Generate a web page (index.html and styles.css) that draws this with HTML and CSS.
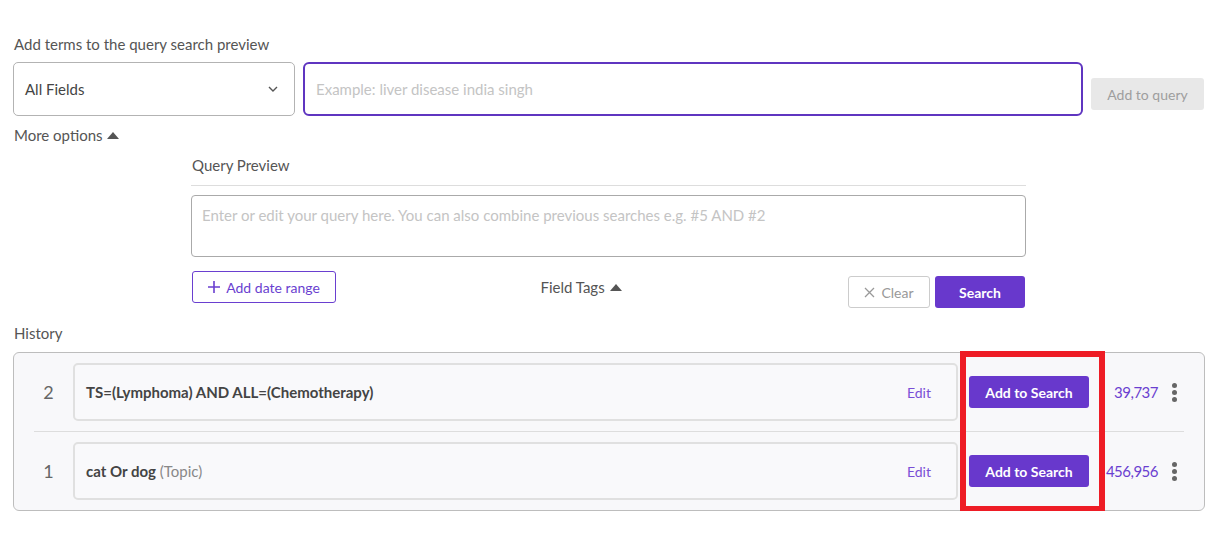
FILE: index.html
```html
<!DOCTYPE html>
<html lang="en">
<head>
  <meta charset="UTF-8">
  <title>Advanced Search</title>
  <link rel="stylesheet" href="styles.css">
</head>
<body>
  <main class="page">
    <div class="label">Add terms to the query search preview</div>
    <div class="term-row">
      <div class="field-select">
        <span>All Fields</span>
        <svg width="10" height="6" viewBox="0 0 10 6"><path d="M1 1l4 4 4-4" fill="none" stroke="#555" stroke-width="1.4"/></svg>
      </div>
      <div class="term-input">Example: liver disease india singh</div>
      <button class="btn-disabled">Add to query</button>
    </div>
    <div class="more-options">More options <svg class="caret" width="12" height="7" viewBox="0 0 12 7"><path d="M0 7L6 0l6 7z" fill="#555"/></svg></div>

    <section class="preview">
      <div class="preview-title">Query Preview</div>
      <div class="preview-box">Enter or edit your query here. You can also combine previous searches e.g. #5 AND #2</div>
      <div class="preview-actions">
        <button class="btn-outline">
          <svg width="12" height="12" viewBox="0 0 12 12"><path d="M6 0v12M0 6h12" stroke="#6a3fd0" stroke-width="1.6"/></svg>
          Add date range
        </button>
        <div class="field-tags">Field Tags <svg class="caret" width="12" height="7" viewBox="0 0 12 7"><path d="M0 7L6 0l6 7z" fill="#555"/></svg></div>
        <div class="action-buttons">
          <button class="btn-clear">
            <svg width="11" height="11" viewBox="0 0 11 11"><path d="M1 1l9 9M10 1l-9 9" stroke="#999" stroke-width="1.3"/></svg>
            Clear
          </button>
          <button class="btn-primary btn-search">Search</button>
        </div>
      </div>
    </section>

    <div class="label history-label">History</div>
    <div class="history">
      <div class="history-row">
        <div class="num">2</div>
        <div class="query-box">
          <span><b>TS=(Lymphoma) AND ALL=(Chemotherapy)</b></span>
          <span class="edit">Edit</span>
        </div>
        <button class="btn-primary btn-add">Add to Search</button>
        <div class="count">39,737</div>
        <div class="kebab"><i></i><i></i><i></i></div>
      </div>
      <div class="history-row">
        <div class="num">1</div>
        <div class="query-box">
          <span><b>cat Or dog</b> <span class="muted">(Topic)</span></span>
          <span class="edit">Edit</span>
        </div>
        <button class="btn-primary btn-add">Add to Search</button>
        <div class="count">456,956</div>
        <div class="kebab"><i></i><i></i><i></i></div>
      </div>
      <div class="highlight"></div>
    </div>
  </main>
</body>
</html>
```
FILE: styles.css
```css
body {
  margin: 0;
  background: #fff;
  color: #555;
  font-family: 'Lato', 'Open Sans', sans-serif;
  font-size: 15px;
}

.page {
  padding: 34px 17px 0 13px;
  width: 1192px;
}

.label {
  padding-left: 1px;
  line-height: 20px;
  margin-bottom: 8px;
}

.term-row {
  display: flex;
  align-items: flex-start;
}

.field-select {
  box-sizing: border-box;
  width: 282px;
  height: 54px;
  border: 1px solid #b3b3b3;
  border-radius: 5px;
  display: flex;
  align-items: center;
  justify-content: space-between;
  padding: 0 16px 0 11px;
  color: #444;
}

.term-input {
  box-sizing: border-box;
  width: 780px;
  height: 54px;
  margin-left: 8px;
  border: 2px solid #5f35c0;
  border-radius: 6px;
  padding: 0 11px;
  display: flex;
  align-items: center;
  color: #c4c4c4;
}

.btn-disabled {
  margin: 16px 0 0 8px;
  width: 113px;
  height: 32px;
  border: none;
  border-radius: 3px;
  background: #e8e8e8;
  color: #9e9e9e;
  font: inherit;
  font-size: 14px;
}

.more-options {
  margin-top: 9px;
  padding-left: 1px;
  line-height: 20px;
}

.caret {
  vertical-align: 2px;
  margin-left: 1px;
}

.preview {
  margin: 10px 179px 0 178px;
}

.preview-title {
  line-height: 20px;
  padding: 0 1px 10px;
  border-bottom: 1px solid #ddd;
}

.preview-box {
  box-sizing: border-box;
  height: 62px;
  margin-top: 9px;
  border: 1px solid #aaa;
  border-radius: 4px;
  padding: 10px;
  color: #c4c4c4;
}

.preview-actions {
  display: flex;
  align-items: flex-start;
  justify-content: space-between;
  margin-top: 14px;
}

.btn-outline {
  width: 144px;
  height: 32px;
  border: 1px solid #6a3fd0;
  border-radius: 3px;
  background: #fff;
  color: #6a3fd0;
  font: inherit;
  font-size: 14px;
  margin-left: 1px;
  display: flex;
  align-items: center;
  justify-content: center;
  gap: 6px;
}

.field-tags {
  margin: 6px 22px 0 0;
  line-height: 20px;
}

.action-buttons {
  display: flex;
  gap: 5px;
  margin: 5px 1px 0 0;
}

.btn-clear {
  width: 82px;
  height: 32px;
  border: 1px solid #ccc;
  border-radius: 3px;
  background: #fff;
  color: #999;
  font: inherit;
  font-size: 14px;
  display: flex;
  align-items: center;
  justify-content: center;
  gap: 6px;
}

.btn-primary {
  border: none;
  border-radius: 3px;
  background: #6838cc;
  color: #fff;
  font: inherit;
  font-size: 14px;
  font-weight: 700;
  height: 32px;
  flex-shrink: 0;
}

.btn-search {
  width: 90px;
}

.history-label {
  margin-top: 15px;
  margin-bottom: 9px;
}

.history {
  position: relative;
  border: 1px solid #bdbdbd;
  border-radius: 6px;
  background: #f8f8fa;
  padding: 10px 20px;
}

.history-row {
  display: flex;
  align-items: center;
  height: 58px;
  padding-bottom: 10px;
}

.history-row + .history-row {
  border-top: 1px solid #ddd;
  padding-top: 10px;
  padding-bottom: 0;
}

.num {
  flex: 0 0 29px;
  margin-right: 10px;
  text-align: center;
  font-size: 18px;
  color: #666;
}

.query-box {
  box-sizing: border-box;
  flex: 0 0 885px;
  height: 58px;
  border: 2px solid #e0e0e0;
  border-radius: 5px;
  background: #f9f9fb;
  display: flex;
  align-items: center;
  justify-content: space-between;
  padding: 0 25px 0 11px;
  color: #444;
}

.muted {
  color: #888;
}

.edit {
  color: #7a4fd6;
  font-size: 14px;
}

.btn-add {
  width: 120px;
  margin-left: 11px;
}

.count {
  flex: 0 0 69px;
  text-align: right;
  color: #6a3fd0;
  letter-spacing: -0.5px;
}

.kebab {
  flex: 0 0 32px;
  margin-right: -6px;
  display: flex;
  flex-direction: column;
  align-items: center;
  gap: 2px;
}

.kebab i {
  width: 5px;
  height: 5px;
  border-radius: 50%;
  background: #666;
}

.highlight {
  position: absolute;
  left: 946px;
  top: -2px;
  width: 133px;
  height: 149px;
  border: 6px solid #ee1c25;
}
```
